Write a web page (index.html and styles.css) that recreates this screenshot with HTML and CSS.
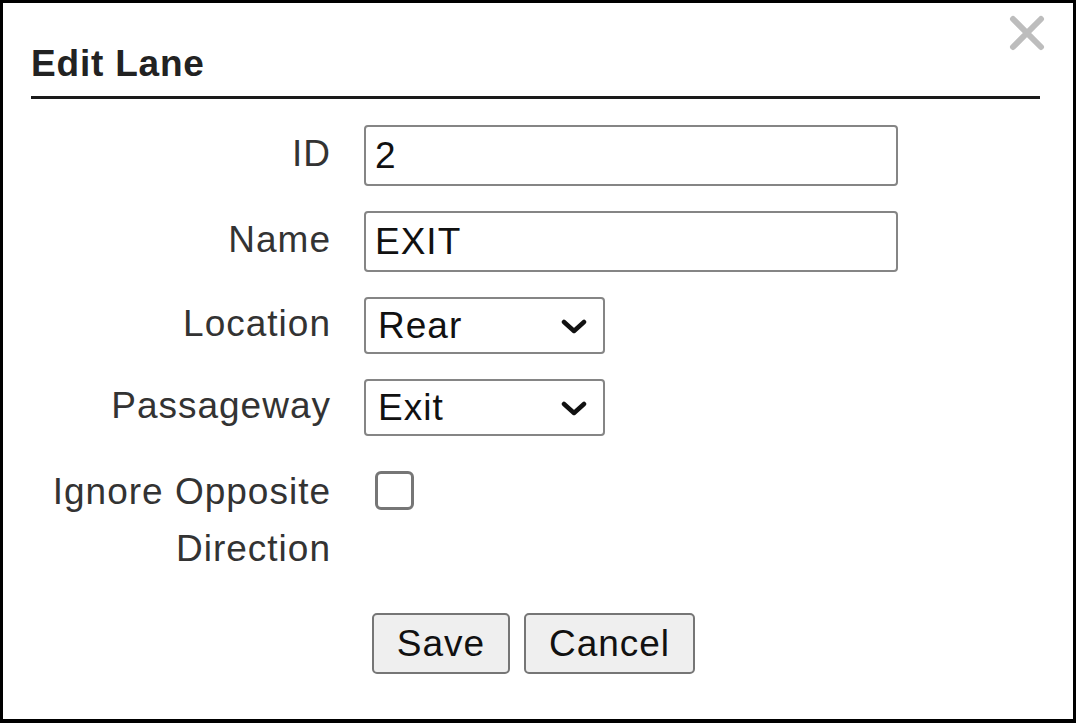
FILE: index.html
```html
<!DOCTYPE html>
<html lang="en">
<head>
<meta charset="utf-8">
<title>Edit Lane</title>
<link rel="stylesheet" href="styles.css">
</head>
<body>
<div class="dialog">
  <div class="dialog-header">
    <h1 class="dialog-title">Edit Lane</h1>
    <button class="close-btn" type="button" aria-label="Close">
      <svg width="36" height="36" viewBox="0 0 36 36">
        <path d="M4 4 L32 32 M32 4 L4 32" stroke="#bdbdbd" stroke-width="6" stroke-linecap="round" fill="none"/>
      </svg>
    </button>
  </div>
  <div class="rule"></div>
  <div class="form">
    <div class="label">ID</div>
    <div class="field"><div class="text-input">2</div></div>

    <div class="label">Name</div>
    <div class="field"><div class="text-input">EXIT</div></div>

    <div class="label">Location</div>
    <div class="field">
      <div class="select-box"><span>Rear</span>
        <svg width="26" height="16" viewBox="0 0 26 16"><path d="M3 3 L13 12 L23 3" stroke="#111" stroke-width="4.5" fill="none" stroke-linecap="round" stroke-linejoin="round"/></svg>
      </div>
    </div>

    <div class="label">Passageway</div>
    <div class="field">
      <div class="select-box"><span>Exit</span>
        <svg width="26" height="16" viewBox="0 0 26 16"><path d="M3 3 L13 12 L23 3" stroke="#111" stroke-width="4.5" fill="none" stroke-linecap="round" stroke-linejoin="round"/></svg>
      </div>
    </div>

    <div class="label label-top">Ignore Opposite<br>Direction</div>
    <div class="field field-top"><div class="checkbox"></div></div>
  </div>
  <div class="actions">
    <button class="btn btn-save" type="button">Save</button>
    <button class="btn btn-cancel" type="button">Cancel</button>
  </div>
</div>
</body>
</html>
```

FILE: styles.css
```css
html, body {
  margin: 0;
  padding: 0;
  background: #ffffff;
}

body {
  font-family: "Liberation Sans", Arial, sans-serif;
}

.dialog {
  box-sizing: border-box;
  width: 1076px;
  height: 723px;
  border: 3px solid #000;
  border-bottom-width: 4px;
  background: #fff;
  padding: 12px 33px 0 28px;
}

.dialog-header {
  display: flex;
  justify-content: space-between;
  align-items: flex-start;
}

.dialog-title {
  margin: 27px 0 0 0;
  font-size: 37px;
  line-height: 44px;
  font-weight: bold;
  letter-spacing: 0.8px;
  color: #222;
}

.close-btn {
  border: none;
  background: none;
  padding: 0;
  margin: 0 -5px 0 0;
  width: 36px;
  height: 36px;
  display: block;
}

.close-btn svg {
  display: block;
}

.rule {
  margin-top: 10px;
  height: 3px;
  background: #1a1a1a;
}

.form {
  margin-top: 26px;
  display: grid;
  grid-template-columns: 299px 1fr;
  column-gap: 34px;
  row-gap: 25px;
  align-items: center;
}

.label {
  font-size: 37px;
  line-height: 57px;
  letter-spacing: 1px;
  color: #333;
  text-align: right;
  white-space: nowrap;
  margin-top: -4px;
  margin-right: -1px;
}

.label-top {
  align-self: start;
  margin-top: 2px;
}

.field-top {
  align-self: start;
}

.text-input {
  box-sizing: border-box;
  width: 534px;
  height: 61px;
  border: 2px solid #858585;
  border-radius: 4px;
  padding: 0 9px;
  font-size: 37px;
  letter-spacing: 1px;
  line-height: 57px;
  color: #111;
}

.select-box {
  box-sizing: border-box;
  width: 241px;
  height: 57px;
  border: 2px solid #858585;
  border-radius: 4px;
  padding: 0 16px 0 12px;
  display: flex;
  align-items: center;
  justify-content: space-between;
  font-size: 37px;
  letter-spacing: 1px;
  color: #111;
}

.select-box svg {
  display: block;
  margin-top: 2px;
}

.checkbox {
  box-sizing: border-box;
  width: 39px;
  height: 39px;
  margin: 10px 0 0 11px;
  border: 3px solid #767676;
  border-radius: 6px;
  background: #fff;
}

.actions {
  display: flex;
  gap: 14px;
  padding-left: 341px;
  margin-top: 36px;
}

.btn {
  box-sizing: border-box;
  height: 61px;
  border: 2px solid #767676;
  border-radius: 5px;
  background: #efefef;
  font-family: "Liberation Sans", Arial, sans-serif;
  font-size: 37px;
  letter-spacing: 1px;
  color: #111;
  padding: 0;
  margin: 0;
}

.btn-save {
  width: 138px;
}

.btn-cancel {
  width: 171px;
}
```
